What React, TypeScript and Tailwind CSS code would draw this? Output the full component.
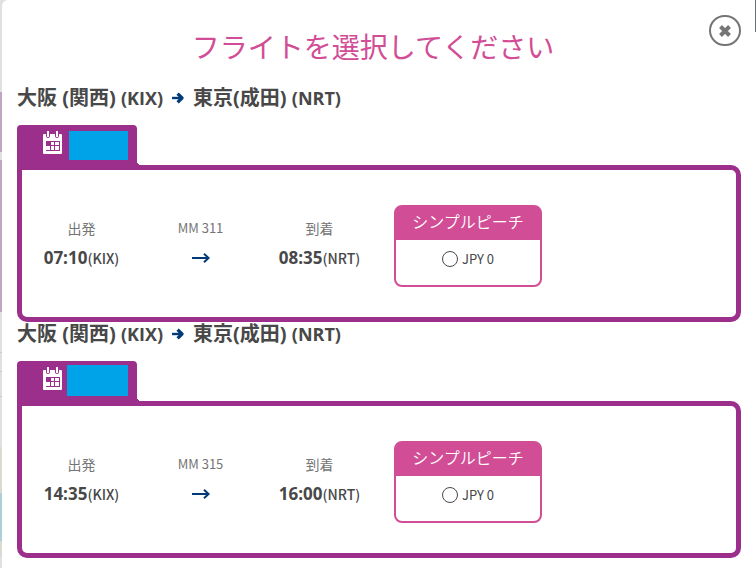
import { useState } from "react";

type Flight = {
  id: string;
  number: string;
  departure: string;
  arrival: string;
  dateClass: string;
};

const flights: Flight[] = [
  {
    id: "outbound",
    number: "MM 311",
    departure: "07:10",
    arrival: "08:35",
    dateClass: "mt-1.5 h-[29px] w-[59px]",
  },
  {
    id: "inbound",
    number: "MM 315",
    departure: "14:35",
    arrival: "16:00",
    dateClass: "mt-1 h-[31px] w-[61px]",
  },
];

function RouteArrow() {
  return (
    <svg width="12" height="12" viewBox="0 0 12 12" fill="none" stroke="#003a79" aria-hidden="true">
      <path d="M0 6h9" strokeWidth="2.4" />
      <path d="M5.6 1.6 10 6 5.6 10.4" strokeWidth="3.2" strokeLinejoin="round" />
    </svg>
  );
}

function FlightArrow() {
  return (
    <svg width="18" height="10" viewBox="0 0 18 10" fill="none" stroke="#003a79" aria-hidden="true">
      <path d="M0 5h16" strokeWidth="2" />
      <path d="M12 .8 16.6 5 12 9.2" strokeWidth="2" />
    </svg>
  );
}

function CalendarIcon() {
  return (
    <svg width="19" height="23" viewBox="0 0 19 23" aria-hidden="true">
      <path
        fill="#fff"
        fillRule="evenodd"
        d="M1 3h2v2q0 2 2 2t2-2V3h5v2q0 2 2 2t2-2V3h2q1 0 1 1v18q0 1-1 1H1q-1 0-1-1V4q0-1 1-1ZM3 10v10h14V10Z"
      />
      <path fill="#fff" d="M4 0h2v6H4zM13 0h2v6h-2z" />
      <path
        fill="#fff"
        d="M8 11h3v3H8zM12 11h4v3h-4zM3 15h4v4H3zM8 15h3v4H8zM12 15h4v4h-4z"
      />
    </svg>
  );
}

function Stop({ label, time, code }: { label: string; time: string; code: string }) {
  return (
    <div className="text-center">
      <p className="text-sm leading-6 text-[#757575]">{label}</p>
      <p className="mt-1 text-sm leading-7 font-medium whitespace-nowrap text-[#484848]">
        <span className="font-['Open_Sans'] text-[17px] font-bold">{time}</span>
        ({code})
      </p>
    </div>
  );
}

function FlightSection({
  flight,
  selected,
  onSelect,
}: {
  flight: Flight;
  selected: boolean;
  onSelect: () => void;
}) {
  return (
    <section>
      <h2 className="mb-[15px] flex h-6 items-center gap-[9px] font-['Open_Sans','Noto_Sans_CJK_JP',sans-serif] text-xl leading-6 font-bold text-[#484848]">
        <span>
          大阪 (関西) <span className="text-[18px]">(KIX)</span>
        </span>
        <RouteArrow />
        <span>
          東京(成田) <span className="text-[18px]">(NRT)</span>
        </span>
      </h2>

      <div className="relative flex h-10 w-[120px] items-start justify-end rounded-t bg-[#9b2f8b] pr-[9px]">
        <div className="mt-1.5 mr-auto ml-[26px]">
          <CalendarIcon />
        </div>
        <div className={`bg-[#00a2e8] ${flight.dateClass}`} />
        <div className="absolute bottom-0 left-full size-1 bg-[radial-gradient(circle_at_top_right,transparent_4px,#9b2f8b_4px)]" />
      </div>

      <div className="grid grid-cols-6 rounded-r-[10px] rounded-bl-[10px] border-5 border-[#9b2f8b] pt-[35px] pb-[30px]">
        <div className="pt-[11px]">
          <Stop label="出発" time={flight.departure} code="KIX" />
        </div>
        <div className="pt-[11px] text-center">
          <p className="text-[13px] leading-6 text-[#757575]">{flight.number}</p>
          <div className="mt-1 flex h-7 items-center justify-center">
            <FlightArrow />
          </div>
        </div>
        <div className="pt-[11px]">
          <Stop label="到着" time={flight.arrival} code="NRT" />
        </div>
        <div className="col-span-2 pl-[15px]">
          <div className="h-[82px] w-[148px] rounded-lg border-2 border-[#d14d95] bg-white">
            <h3 className="rounded-t bg-[#d14d95] pb-[5px] text-center text-base leading-7 font-[350] text-white">
              シンプルピーチ
            </h3>
            <label className="flex items-center justify-center gap-1 pt-[7px] text-[13px] leading-6 text-[#484848]">
              <input
                type="radio"
                name={flight.id}
                checked={selected}
                onChange={onSelect}
                className="size-4 appearance-none rounded-full border border-[#484848] bg-white checked:border-4"
              />
              JPY 0
            </label>
          </div>
        </div>
      </div>
    </section>
  );
}

export default function App() {
  const [open, setOpen] = useState(true);
  const [selected, setSelected] = useState<Record<string, boolean>>({});

  return (
    <div className="relative flex min-h-screen bg-[#e0e0e0] font-['Noto_Sans_CJK_JP',sans-serif]">
      {/* page behind the dialog */}
      <div className="flex w-0.5 flex-col">
        <div className="h-[92px]" />
        <div className="h-[60px] bg-[#c1a6c2]" />
        <div className="h-2" />
        <div className="h-[152px] bg-[#c1a6c2]" />
        <div className="h-10" />
        <div className="h-px bg-[#b4d3dc]" />
        <div className="h-[18px]" />
        <div className="h-px bg-[#b4d3dc]" />
        <div className="h-6" />
        <div className="h-px bg-[#b4d3dc]" />
        <div className="h-[50px]" />
        <div className="h-[46px] bg-[#dcd8d2]" />
        <div className="h-12 bg-[#acd0d6]" />
        <div className="h-4 bg-[#dcd8d2]" />
      </div>

      {open && (
        <main role="dialog" aria-labelledby="title" className="relative flex-1 rounded-tl-md bg-white pr-3.5 pb-2.5 pl-[15px]">
          <h1 id="title" className="pt-[26px] pr-3 pb-5 text-center text-[28px] leading-10 font-normal text-[#d14d95]">
            フライトを選択してください
          </h1>
          <button
            type="button"
            aria-label="閉じる"
            onClick={() => setOpen(false)}
            className="absolute top-[15px] right-3.5 flex h-[31px] w-8 items-center justify-center rounded-full border-2 border-[#757575] text-[#757575]"
          >
            <svg width="14" height="14" viewBox="0 0 14 14" aria-hidden="true">
              <path d="M2.5 2.5l9 9M11.5 2.5l-9 9" stroke="currentColor" strokeWidth="4" />
            </svg>
          </button>

          {flights.map((flight) => (
            <FlightSection
              key={flight.id}
              flight={flight}
              selected={!!selected[flight.id]}
              onSelect={() => setSelected({ ...selected, [flight.id]: true })}
            />
          ))}
        </main>
      )}

      <div className="w-px bg-white">
        <div className="h-8 bg-[#65707a]" />
      </div>
    </div>
  );
}
